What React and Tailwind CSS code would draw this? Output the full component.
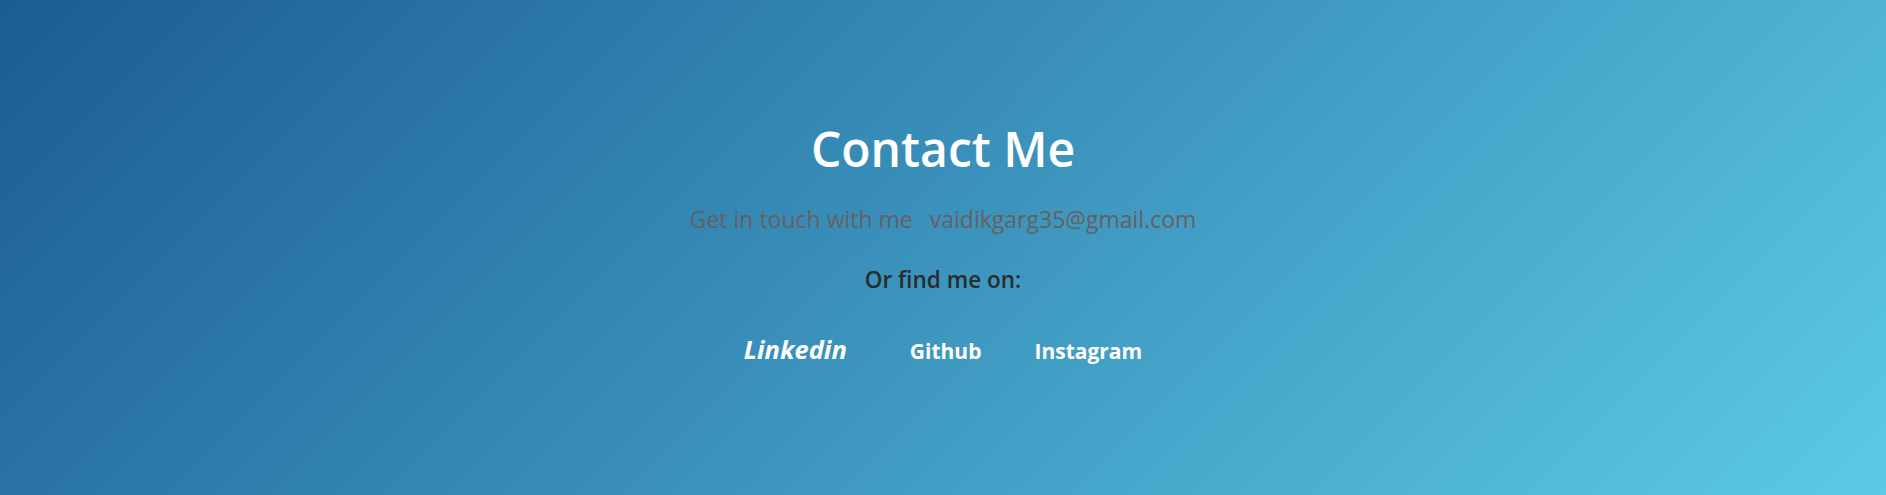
export default function App() {
  return (
    <section
      className="h-[495px] w-full flex flex-col items-center justify-center pb-[8px] bg-[linear-gradient(135deg,#1b5c93,#5ccae6)] text-center"
      style={{ fontFamily: '"Open Sans", "Noto Sans", sans-serif' }}
    >
      <h1 className="text-[48px] font-semibold text-white leading-none">Contact Me</h1>

      <p className="mt-[35px] text-[23px] text-[#676060] leading-none">
        <span>Get in touch with me</span>
        <span className="ml-[17px]">vaidikgarg35@gmail.com</span>
      </p>

      <p className="mt-[38px] text-[22.5px] font-semibold text-[#2b2b2b] leading-none">Or find me on:</p>

      <nav className="mt-[45px] flex items-baseline gap-[53px] text-white font-bold leading-none">
        <a href="#" className="text-[25.5px] italic mr-[10px]">Linkedin</a>
        <a href="#" className="text-[21px]">Github</a>
        <a href="#" className="text-[21px]">Instagram</a>
      </nav>
    </section>
  )
}
